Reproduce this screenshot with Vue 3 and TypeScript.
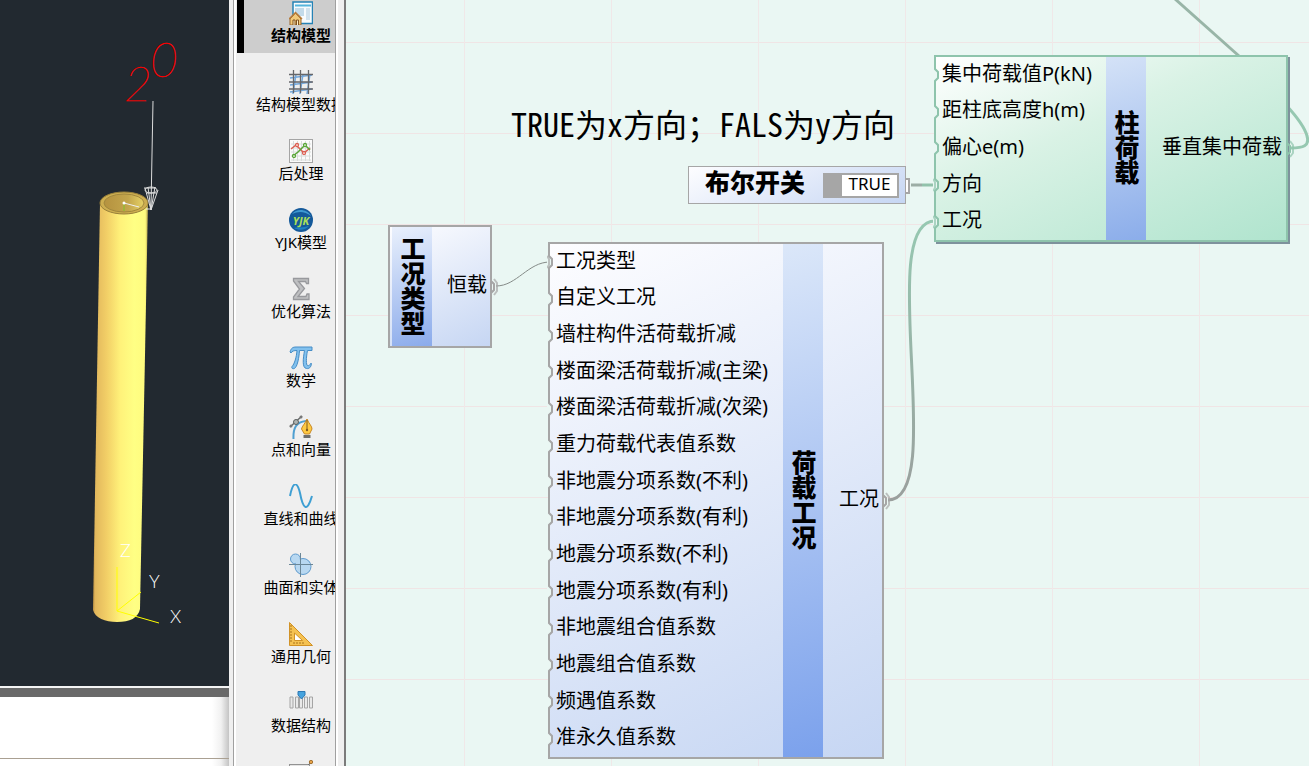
<script setup lang="ts">
import { ref } from 'vue'

interface Category {
  id: string
  label: string
}

interface Port {
  label: string
  linked?: boolean
}

const categories: Category[] = [
  { id: 'model', label: '结构模型' },
  { id: 'data', label: '结构模型数据' },
  { id: 'post', label: '后处理' },
  { id: 'yjk', label: 'YJK模型' },
  { id: 'sigma', label: '优化算法' },
  { id: 'pi', label: '数学' },
  { id: 'pen', label: '点和向量' },
  { id: 'curve', label: '直线和曲线' },
  { id: 'solid', label: '曲面和实体' },
  { id: 'ruler', label: '通用几何' },
  { id: 'struct', label: '数据结构' },
  { id: 'edit', label: '' },
]

const loadCaseInputs: Port[] = [
  { label: '工况类型', linked: true },
  { label: '自定义工况' },
  { label: '墙柱构件活荷载折减' },
  { label: '楼面梁活荷载折减(主梁)' },
  { label: '楼面梁活荷载折减(次梁)' },
  { label: '重力荷载代表值系数' },
  { label: '非地震分项系数(不利)' },
  { label: '非地震分项系数(有利)' },
  { label: '地震分项系数(不利)' },
  { label: '地震分项系数(有利)' },
  { label: '非地震组合值系数' },
  { label: '地震组合值系数' },
  { label: '频遇值系数' },
  { label: '准永久值系数' },
]

const columnInputs: Port[] = [
  { label: '集中荷载值P(kN)' },
  { label: '距柱底高度h(m)' },
  { label: '偏心e(m)' },
  { label: '方向', linked: true },
  { label: '工况', linked: true },
]

const selected = ref('model')
const direction = ref(true)
</script>

<template>
  <div class="app">
    <aside class="left">
      <div class="viewport">
        <svg class="scene" width="229" height="686" viewBox="0 0 229 686">
          <defs>
            <linearGradient id="body" x1="0" x2="1" y1="0" y2="0">
              <stop offset="0" stop-color="#b98f42" />
              <stop offset="0.04" stop-color="#e2b75c" />
              <stop offset="0.25" stop-color="#f2cf67" />
              <stop offset="0.5" stop-color="#fff27a" />
              <stop offset="0.75" stop-color="#ffff84" />
              <stop offset="0.95" stop-color="#fffb7e" />
              <stop offset="1" stop-color="#b5a14e" />
            </linearGradient>
            <linearGradient id="cap" x1="0" x2="1" y1="0" y2="0">
              <stop offset="0" stop-color="#b5923f" />
              <stop offset="0.6" stop-color="#c3a54c" />
              <stop offset="1" stop-color="#e6d266" />
            </linearGradient>
          </defs>
          <path d="M100 203 L93 610 C95 618 105 622 117 622 C130 622 138 618 140 609 L148 203 Z" fill="url(#body)" />
          <ellipse cx="124" cy="203" rx="24" ry="11" fill="#cdae50" stroke="#99803a" />
          <ellipse cx="124" cy="203" rx="20" ry="9" fill="url(#cap)" stroke="#a1873d" />
          <path d="M124 203 V211" stroke="#7fc42a" fill="none" />
          <path d="M124 203 L139 207 M146 209 L151 209" stroke="#eee" fill="none" />
          <circle cx="124" cy="203" r="1.5" fill="#fff" />
          <g stroke="#dcdcdc" fill="none">
            <path d="M153 101 L152 154 L151 208" />
            <path d="M145 188 L151 210 L158 190 M148 187 L151 210 L155 187 M144 188 H156 M147 193 H157" />
            <ellipse cx="151" cy="190" rx="6" ry="3" />
          </g>
          <g class="load">
            <text x="124" y="101">2</text>
            <text x="150" y="77">0</text>
          </g>
          <path d="M117 567 V611 L141 592 M117 611 L159 623" stroke="#ff0" fill="none" />
          <g class="axis">
            <text x="120" y="557">Z</text>
            <text x="149" y="588">Y</text>
            <text x="170" y="623">X</text>
          </g>
        </svg>
      </div>
      <div class="splitter"></div>
      <div class="console"><div class="prompt"></div></div>
    </aside>

    <nav class="rail" aria-label="分类">
      <div class="frame">
        <button
          v-for="c in categories"
          :key="c.id"
          type="button"
          class="cat"
          :class="{ on: selected === c.id }"
          :aria-label="c.label || c.id"
          @click="selected = c.id"
        >
          <svg width="24" height="24" viewBox="0 0 24 24" fill="none" aria-hidden="true">
            <g v-if="c.id === 'model'">
              <rect x="4" y="1" width="19.500" height="21.500" fill="#f7fbfd" stroke="#2582b5" stroke-width="1.500" />
              <path d="M6 4.500H22" stroke="#55b5dc" stroke-width="2" />
              <path d="M6 7H15V15H6Z" fill="#c3dbea" />
              <path d="M17 8H21M17 10H21M17 12H21M17 14H21M17 16H21M17 18H21" stroke="#abc9dd" />
              <path d="M1 18L6.500 12L12 18V24H1Z" fill="#f1c979" stroke="#9b672e" />
              <path d="M0 18L6.500 11.500L13 18" stroke="#b77c3a" stroke-width="1.500" />
              <path d="M4 24V19H6V24M7.500 24V19H9.500V24" fill="#fff2ca" stroke="#80501f" />
            </g>
            <g v-else-if="c.id === 'data'">
              <path d="M1 8L23 5M1 15L23 12M1 22L23 19M7 4L4 24M14 4L11 24M21 4L18 24" stroke="#72a7dc" stroke-width="1.500" />
              <path d="M4.500 0V23M11.500 0V23M19.500 0V24M0 4.500H24M0 12H24M0 19H24" stroke="#65666a" stroke-width="1.300" />
            </g>
            <g v-else-if="c.id === 'post'">
              <rect x="0.500" y="0.500" width="23" height="23" fill="#fbfbfb" stroke="#a5a5a5" />
              <path d="M4.500 2V22M8.500 2V22M12.500 2V22M16.500 2V22M20.500 2V22M2 5H22M2 9H22M2 13H22M2 17H22M2 21H22" stroke="#d8dcda" />
              <path d="M2 10L7 6L15 14L21 9" stroke="#dc5f52" stroke-width="1.500" />
              <path d="M4 17L9 13L16 6L21 11" stroke="#58a536" stroke-width="1.500" />
              <g fill="#fff" stroke-width="1.300">
                <circle cx="8" cy="6" r="1.500" stroke="#dc5f52" />
                <circle cx="15" cy="14" r="1.500" stroke="#dc5f52" />
                <circle cx="5" cy="17" r="1.500" stroke="#58a536" />
                <circle cx="16" cy="6" r="1.500" stroke="#58a536" />
              </g>
            </g>
            <g v-else-if="c.id === 'yjk'">
              <circle cx="12" cy="12" r="12" fill="#14599a" />
              <path d="M3 6C8 0 18 1 22 8C16 3 9 3 3 6Z" fill="#3f9ad2" />
              <path d="M5 20C10 23 17 22 20 18C14 20 9 19 5 20Z" fill="#1f80c1" />
              <text x="12" y="16.500" class="brand">YJK</text>
            </g>
            <g v-else-if="c.id === 'sigma'">
              <path d="M4.500 1.500H19.500V6.500H17.500L16.500 4.500H9.500L15.500 11.500L9 19.500H17L18 17H20V22.500H4.500V20L10.500 12L4.500 4Z" fill="#bfc0c2" stroke="#98999d" stroke-width="1.300" />
            </g>
            <g v-else-if="c.id === 'pi'">
              <path d="M1 6C2 2 4 1 7 1H23V4.500H18.500C17 12 17 19 18.500 19.500C20 20 21 19 21.500 17.500H22.500C22 21.500 20 23 17.500 22.500C13 22 14 13 15.500 4.500H10.500C10 12 8.500 19 6.500 21.500C5 23.500 2 23 3 20.500C5.500 18 7.500 11 8 4.500C5 4.500 3 5 2 7Z" fill="#82c1ee" stroke="#468dc6" />
            </g>
            <g v-else-if="c.id === 'pen'">
              <path d="M4.500 24C4 13 7 7 17 6" stroke="#4f9fd1" stroke-width="2" />
              <path d="M1 12L13 1" stroke="#696c6c" stroke-width="1.500" />
              <circle cx="7" cy="7" r="2.500" fill="#aeb3b1" stroke="#5c5f5f" />
              <circle cx="2" cy="11" r="1.500" fill="#777" />
              <circle cx="12" cy="2" r="1.500" fill="#777" />
              <path d="M18 4C20 9 23 11 23 14L20.500 19H15.500L12.500 14C13 11 16 9 18 4Z" fill="#ffca42" stroke="#c88724" />
              <path d="M18 5V14" stroke="#805c22" />
              <circle cx="18" cy="15" r="1.200" fill="#805c22" />
              <path d="M14.500 20H21.500V23H14.500Z" fill="#6d6e6c" />
            </g>
            <g v-else-if="c.id === 'curve'">
              <path d="M1 12C4 -3 8 -3 11 9C14 25 18 29 23 12" stroke="#3e9fd3" stroke-width="2" />
            </g>
            <g v-else-if="c.id === 'solid'">
              <circle cx="6.500" cy="6" r="5" fill="#b8d8f1" stroke="#5f9bce" />
              <circle cx="14" cy="13.500" r="8" fill="#b8d8f1" stroke="#5f9bce" />
              <path d="M5 7L8 4L13 8L8 13Z" fill="#b8d8f1" />
              <path d="M11.500 0V24M0 11.500H24" stroke="#6b8798" />
            </g>
            <g v-else-if="c.id === 'ruler'">
              <path d="M0.500 0.500L23.500 23.500H0.500Z" fill="#f5c252" stroke="#d19227" />
              <path d="M5.500 11L13.500 18.500H5.500Z" fill="#fff" stroke="#d19227" />
              <path d="M1 4H3M1 7H3M1 10H3M1 13H3M1 16H3M1 19H3M5 22V20M8 22V20M11 22V20M14 22V20" stroke="#a9751e" />
            </g>
            <g v-else-if="c.id === 'struct'">
              <path d="M1 6H4V17H1ZM6.500 6H9.500V17H6.500ZM10.500 6H13.500V17H10.500ZM15.500 6H18.500V17H15.500ZM20.500 6H23.500V17H20.500Z" fill="#e9e9e9" stroke="#a5a5a5" />
              <path d="M9 0.500H16V4L12.500 8L9 4Z" fill="#46a3de" stroke="#2d79b4" />
            </g>
            <g v-else>
              <rect x="0.500" y="4.500" width="20" height="15" fill="#e4e4e4" stroke="#929292" />
              <path d="M3 7H18M3 10H18" stroke="#aaa" stroke-dasharray="1 1" />
              <path d="M19 5L23 1" stroke="#777" />
              <circle cx="22" cy="2" r="1.700" fill="#e7a348" stroke="#a2702f" />
            </g>
          </svg>
          <span v-if="c.label">{{ c.label }}</span>
        </button>
      </div>
    </nav>

    <main class="canvas">
      <svg class="wires" width="963" height="766" viewBox="346 0 963 766" fill="none" aria-hidden="true">
        <defs>
          <linearGradient id="wireUp" x1="0" x2="0" y1="1" y2="0">
            <stop offset="0" stop-color="#9a9f9d" />
            <stop offset="1" stop-color="#96c8b1" />
          </linearGradient>
        </defs>
        <path d="M496 286 C517 286 528 262 550 262" stroke="#858b88" />
        <path d="M888 500 C949 500 874 221 935 221" stroke="url(#wireUp)" stroke-width="3" />
        <path d="M911 185 H922" stroke="#9cada5" stroke-width="3" />
        <path d="M922 185 H936" stroke="#92c2ab" stroke-width="3" />
        <path d="M1175 -1 L1239 56" stroke="#98b5a7" stroke-width="3" />
        <path d="M1291 148 C1303 148 1310 146 1307 136 C1305 128 1297 117 1286 105" stroke="#96c8b1" stroke-width="3" />
      </svg>

      <p class="note">TRUE为x方向；FALS为y方向</p>

      <section class="node kind">
        <h2 class="strip">工况类型</h2>
        <div class="out">
          <span>恒载</span>
          <svg class="port right" width="8" height="18" viewBox="0 0 8 18" fill="none">
            <path class="edge" d="M1 1V3L4 6V12L1 15V17" />
            <path class="ring" d="M4 1L7 5V13L4 17" />
          </svg>
        </div>
      </section>

      <section class="node toggle">
        <h2 id="dir">布尔开关</h2>
        <button type="button" role="switch" :aria-checked="direction" aria-labelledby="dir" @click="direction = !direction">
          {{ direction ? 'TRUE' : 'FALSE' }}
        </button>
        <i class="plug"></i>
      </section>

      <section class="node loadcase">
        <ul class="ins">
          <li v-for="p in loadCaseInputs" :key="p.label">
            <svg class="port" width="8" height="18" viewBox="0 0 8 18" fill="none">
              <path class="gap" d="M0 3H2L5 6V12L2 15H0Z" />
              <path class="edge" d="M2 1V3L5 6V12L2 15V17" />
              <path v-if="p.linked" class="ring" d="M0 3L2 6V12L0 15" />
            </svg>
            {{ p.label }}
          </li>
        </ul>
        <h2 class="strip">荷载工况</h2>
        <div class="out">
          <span>工况</span>
          <svg class="port right" width="8" height="18" viewBox="0 0 8 18" fill="none">
            <path class="edge" d="M1 1V3L4 6V12L1 15V17" />
            <path class="ring" d="M4 1L7 5V13L4 17" />
          </svg>
        </div>
      </section>

      <section class="node column">
        <ul class="ins">
          <li v-for="p in columnInputs" :key="p.label">
            <svg class="port" width="8" height="18" viewBox="0 0 8 18" fill="none">
              <path class="gap" d="M0 3H2L5 6V12L2 15H0Z" />
              <path class="edge" d="M2 1V3L5 6V12L2 15V17" />
              <path v-if="p.linked" class="ring" d="M0 3L2 6V12L0 15" />
            </svg>
            {{ p.label }}
          </li>
        </ul>
        <h2 class="strip">柱荷载</h2>
        <div class="out">
          <span>垂直集中荷载</span>
          <svg class="port right" width="8" height="18" viewBox="0 0 8 18" fill="none">
            <path class="edge" d="M1 1V3L4 6V12L1 15V17" />
            <path class="ring" d="M4 1L7 5V13L4 17" />
          </svg>
        </div>
      </section>
    </main>
  </div>
</template>

<style>
html,
body {
  height: 100%;
  overflow: hidden;
}
</style>

<style scoped>
.app {
  display: flex;
  height: 100vh;
  overflow: hidden;
  background: #efefef;
  color: #000;
  font-family: 'Noto Sans', 'Noto Sans CJK SC', sans-serif;
}
.left {
  position: relative;
  display: flex;
  flex-direction: column;
  flex: none;
  width: 229px;
}
.viewport {
  flex: 1;
  overflow: hidden;
  background: #222930;
}
.scene {
  display: block;
}
.load {
  fill: #f00;
  stroke: #f00;
  stroke-width: 0.4px;
  font-family: Lato, sans-serif;
  font-size: 48px;
  font-style: italic;
  font-weight: 100;
}
.axis {
  fill: #fff;
  font-family: Lato, sans-serif;
  font-size: 18px;
  font-weight: 300;
}
.splitter {
  height: 9px;
  border-top: 2px solid #f4f4f4;
  background: #696969;
}
.console {
  display: flex;
  align-items: flex-end;
  height: 69px;
  background: linear-gradient(to left, #c4c4c4, #f1f1f1 8px, #fff 17px);
}
.prompt {
  flex: 1;
  height: 7px;
  border-top: 1px solid #aaa092;
}
.rail {
  flex: none;
  box-sizing: border-box;
  width: 117px;
  padding: 0 8px 0 4px;
  border-right: 2px solid #7b7b7b;
  background: #efefef;
}
.frame {
  box-sizing: border-box;
  height: 100%;
  overflow: hidden;
  border: solid #a0a0a0;
  border-width: 0 1px;
  box-shadow: inset 2px 0 #fff, 2px 0 #fff;
  padding-left: 3px;
}
.cat {
  display: flex;
  flex-direction: column;
  align-items: center;
  box-sizing: border-box;
  width: 128px;
  height: 69px;
  padding: 17px 0 0;
  border: 0;
  background: none;
  color: #000;
  font: 15px/21px 'Noto Sans', 'Noto Sans CJK SC', sans-serif;
  white-space: nowrap;
}
.cat:first-child {
  margin-top: -16px;
}
.cat svg {
  flex: none;
}
.cat.on {
  background: #cdcdcd;
  box-shadow: inset 7px 0 #000;
  font-weight: 700;
}
.brand {
  fill: #a9df59;
  font: italic 700 11px 'Noto Sans', sans-serif;
  text-anchor: middle;
}
.canvas {
  position: relative;
  flex: 1;
  min-width: 0;
  overflow: hidden;
  background:
    linear-gradient(to right, #f0e8e8 1px, transparent 1px) 118px 0 / 147px 91px,
    linear-gradient(#f0e5e5 1px, transparent 1px) 0 42px / 147px 91px,
    #eaf7f3;
}
.wires {
  position: absolute;
  left: 0;
  top: 0;
}
.note {
  position: absolute;
  left: 165px;
  top: 103px;
  margin: 0;
  font: 32px/40px 'Noto Sans Mono CJK SC', 'Noto Sans CJK SC', monospace;
  white-space: nowrap;
}
.node {
  --edge: #a6a6a6;
  position: absolute;
  display: flex;
  box-sizing: border-box;
  border: 2px solid var(--edge);
  background: linear-gradient(155deg, #fdfdff, #c6d6f3);
  font-size: 20px;
  line-height: 28px;
  white-space: nowrap;
}
.kind {
  left: 42px;
  top: 225px;
  width: 104px;
  height: 123px;
  padding-left: 2px;
}
.loadcase {
  left: 202px;
  top: 242px;
  width: 336px;
  height: 517px;
}
.column {
  --edge: #8ec4ac;
  left: 588px;
  top: 55px;
  width: 354px;
  height: 187px;
  background: linear-gradient(155deg, #fff, #d9f2e5 40%, #b0e4ce);
  box-shadow: 2px 2px #7e929c;
}
.strip {
  display: flex;
  align-items: center;
  justify-content: center;
  box-sizing: border-box;
  width: 40px;
  margin: 0;
  padding-bottom: 2px;
  background: linear-gradient(165deg, #dbe7f9, #7ba1ec);
  font-size: 25px;
  font-weight: 900;
  line-height: 42px;
  writing-mode: vertical-rl;
}
.column .strip {
  background: linear-gradient(165deg, #d4e2f7, #8badea);
}
.kind .strip {
  background: linear-gradient(165deg, #e9f0fc, #8babeb);
}
.ins {
  display: flex;
  flex-direction: column;
  margin: 0;
  padding: 0;
  list-style: none;
}
.loadcase .ins {
  width: 233px;
}
.column .ins {
  width: 170px;
}
.ins li {
  position: relative;
  display: flex;
  flex: 1;
  align-items: center;
  padding: 0 0 3px 6px;
}
.out {
  position: relative;
  display: flex;
  flex: 1;
  align-items: center;
  justify-content: flex-end;
  padding: 0 3px 3px 0;
}
.column .out {
  padding-right: 4px;
}
.port {
  position: absolute;
  left: -3px;
  top: calc(50% - 9px);
}
.port.right {
  left: auto;
  right: -8px;
}
.gap {
  fill: #eaf7f3;
}
.edge {
  stroke: var(--edge);
  stroke-width: 2;
}
.ring {
  stroke: var(--edge);
  stroke-width: 2;
  stroke-opacity: 0.7;
}
.toggle {
  left: 342px;
  top: 166px;
  align-items: center;
  width: 218px;
  height: 38px;
  padding: 0 6px 0 16px;
  border-width: 1px;
  justify-content: space-between;
}
.toggle h2 {
  margin: 0;
  padding-bottom: 5px;
  font-size: 25px;
  font-weight: 900;
  line-height: 31px;
}
.toggle button {
  box-sizing: border-box;
  width: 76px;
  height: 25px;
  padding: 0 0 3px;
  border: 2px solid #a6a6a6;
  border-left-width: 19px;
  background: #fff;
  color: #000;
  font: 17px/18px 'Noto Sans', sans-serif;
}
.plug {
  position: absolute;
  left: 100%;
  top: 11px;
  width: 2px;
  height: 12px;
  border: 2px solid #a6a6a6;
  border-left-width: 1px;
  background: #fff;
}
</style>
